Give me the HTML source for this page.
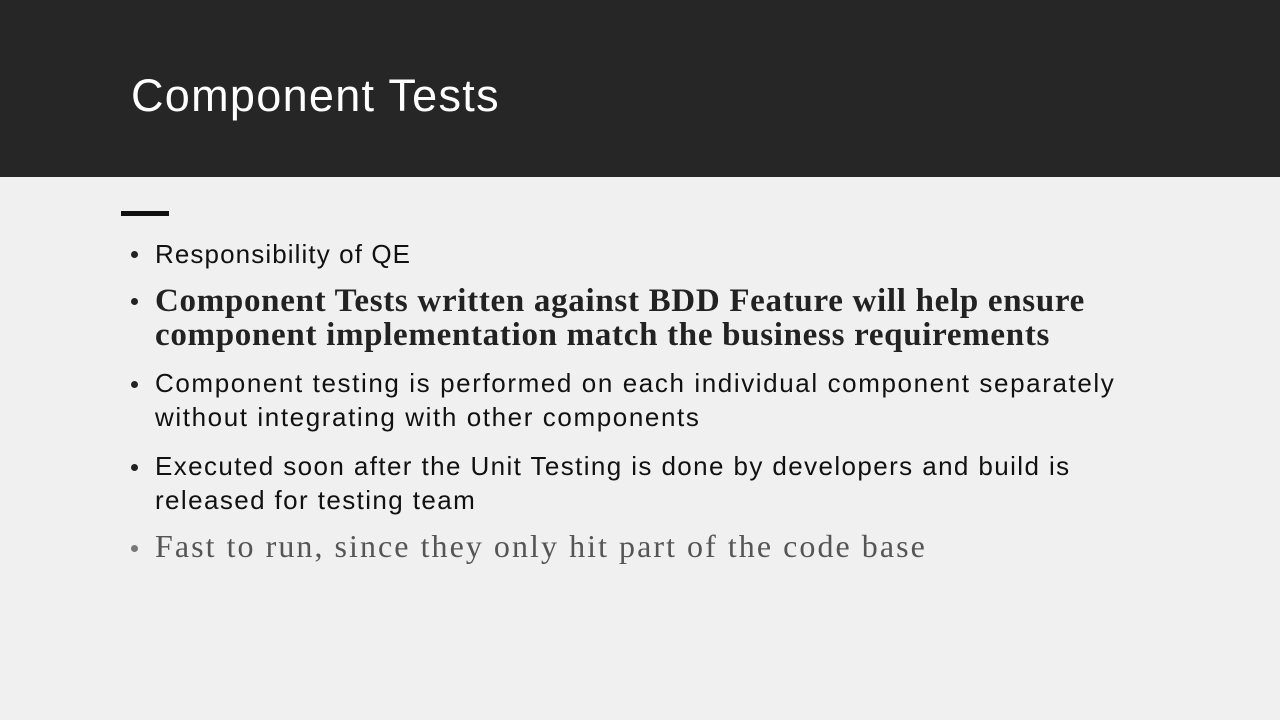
<!DOCTYPE html>
<html><head><style>
body{margin:0;width:1280px;height:720px;overflow:hidden;background:#f0f0f0;position:relative;font-family:"Liberation Sans",sans-serif;}
.hd{position:absolute;left:0;top:0;width:1280px;height:177px;background:#262626;}
.t{position:absolute;left:131px;top:70px;font-size:45px;color:#fff;white-space:nowrap;letter-spacing:1.3px;}
.bar{position:absolute;left:121px;top:211px;width:48px;height:5px;background:#111;}
.l{position:absolute;left:155px;white-space:nowrap;color:#111;}
.s{font-size:26px;letter-spacing:1.4px;line-height:34px;}
.b{font-family:"Liberation Serif",serif;font-weight:bold;font-size:33px;letter-spacing:0.7px;line-height:34px;color:#222;}
.g{font-family:"Liberation Serif",serif;font-size:32px;color:#555;letter-spacing:2.05px;}
.d{position:absolute;left:131px;width:7px;height:7px;border-radius:50%;background:#222;}
</style></head><body>
<div class="hd"></div>
<div class="t">Component Tests</div>
<div class="bar"></div>
<div class="d" style="top:251px"></div>
<div class="l s" style="top:237px;letter-spacing:1.1px">Responsibility of QE</div>
<div class="d" style="top:298px"></div>
<div class="l b" style="top:284px">Component Tests written against BDD Feature will help ensure<br>component implementation match the business requirements</div>
<div class="d" style="top:381px"></div>
<div class="l s" style="top:366px;letter-spacing:1.6px">Component testing is performed on each individual component separately<br>without integrating with other components</div>
<div class="d" style="top:464px"></div>
<div class="l s" style="top:449px">Executed soon after the Unit Testing is done by developers and build is<br>released for testing team</div>
<div class="d" style="top:545px;background:#777"></div>
<div class="l g" style="top:528px">Fast to run, since they only hit part of the code base</div>
</body></html>
